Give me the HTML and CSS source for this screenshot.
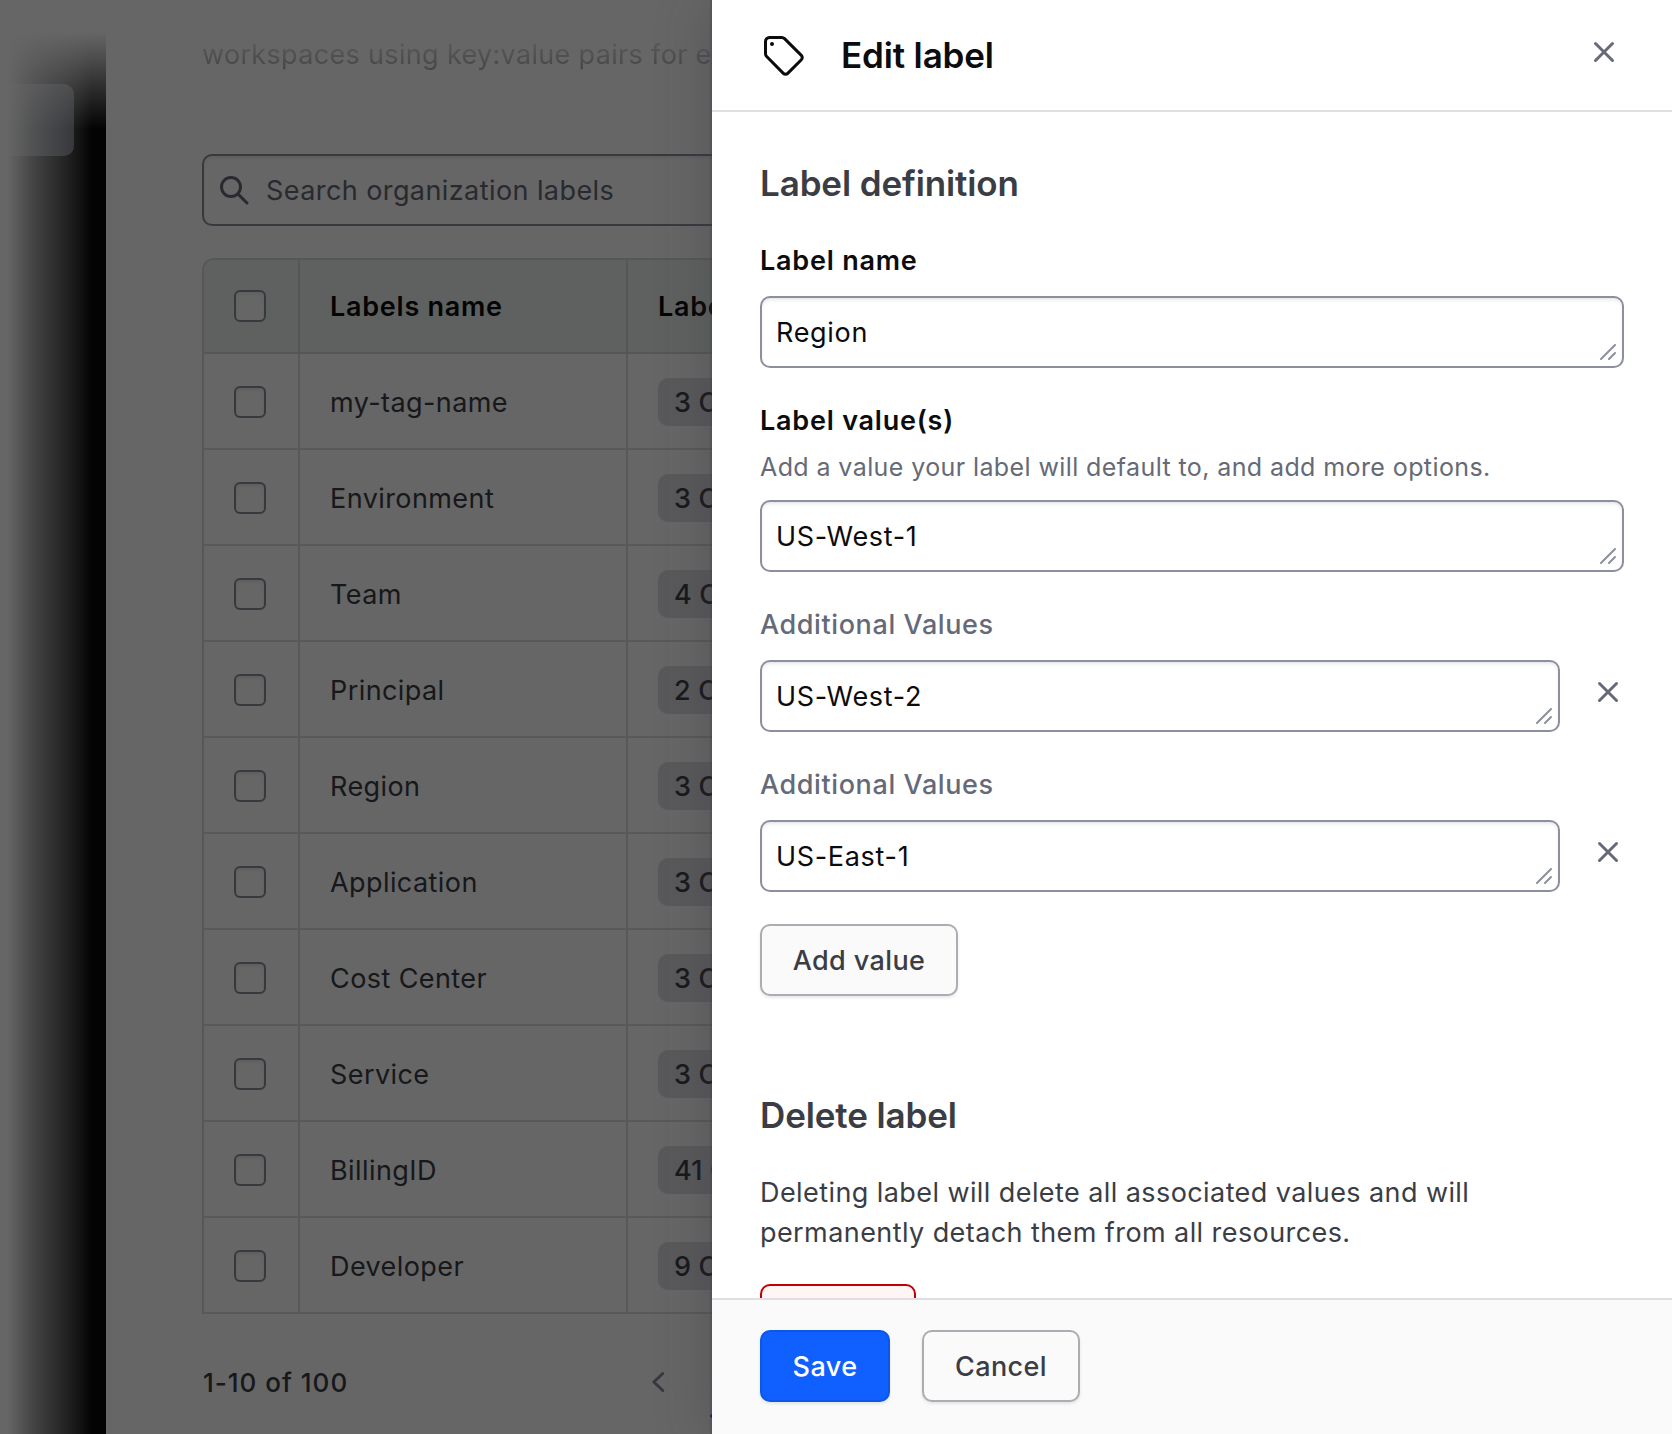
FILE: index.html
```html
<!DOCTYPE html>
<html lang="en">
<head>
<meta charset="utf-8">
<title>Edit label</title>
<link rel="stylesheet" href="styles.css">
</head>
<body>
<svg class="sprite" aria-hidden="true">
  <symbol id="x" viewBox="0 0 16 16"><path d="M3.75 3.75l8.5 8.5M12.25 3.75l-8.5 8.5" fill="none" stroke="currentColor" stroke-width="1.5" stroke-linecap="round"/></symbol>
  <symbol id="grip" viewBox="0 0 16 16"><path d="M1 15L15 1M9 15l6-6" fill="none" stroke="currentColor" stroke-width="2" stroke-linecap="round"/></symbol>
</svg>
<div class="app">
  <aside class="sidebar"><div class="sidebar-item"></div></aside>
  <main class="page">
    <p class="intro">workspaces using key:value pairs for easy filtering</p>
    <div class="search">
      <svg width="32" height="32" viewBox="0 0 16 16"><g fill="none" stroke="currentColor" stroke-width="1.5" stroke-linecap="round"><circle cx="6.5" cy="6.5" r="4.75"/><path d="M10.2 10.2l4.3 4.3"/></g></svg>
      <span>Search organization labels</span>
    </div>
    <div class="table">
      <div class="row head"><div class="cell"><i class="check"></i></div><div class="cell"><span>Labels name</span></div><div class="cell"><span>Label values</span></div></div>
      <div class="row"><div class="cell"><i class="check"></i></div><div class="cell"><span>my-tag-name</span></div><div class="cell"><span class="badge">3 Options</span></div></div>
      <div class="row"><div class="cell"><i class="check"></i></div><div class="cell"><span>Environment</span></div><div class="cell"><span class="badge">3 Options</span></div></div>
      <div class="row"><div class="cell"><i class="check"></i></div><div class="cell"><span>Team</span></div><div class="cell"><span class="badge">4 Options</span></div></div>
      <div class="row"><div class="cell"><i class="check"></i></div><div class="cell"><span>Principal</span></div><div class="cell"><span class="badge">2 Options</span></div></div>
      <div class="row"><div class="cell"><i class="check"></i></div><div class="cell"><span>Region</span></div><div class="cell"><span class="badge">3 Options</span></div></div>
      <div class="row"><div class="cell"><i class="check"></i></div><div class="cell"><span>Application</span></div><div class="cell"><span class="badge">3 Options</span></div></div>
      <div class="row"><div class="cell"><i class="check"></i></div><div class="cell"><span>Cost Center</span></div><div class="cell"><span class="badge">3 Options</span></div></div>
      <div class="row"><div class="cell"><i class="check"></i></div><div class="cell"><span>Service</span></div><div class="cell"><span class="badge">3 Options</span></div></div>
      <div class="row"><div class="cell"><i class="check"></i></div><div class="cell"><span>BillingID</span></div><div class="cell"><span class="badge">41 Options</span></div></div>
      <div class="row"><div class="cell"><i class="check"></i></div><div class="cell"><span>Developer</span></div><div class="cell"><span class="badge">9 Options</span></div></div>
    </div>
    <div class="pagination">
      <span class="count">1-10 of 100</span>
      <svg width="32" height="32" viewBox="0 0 16 16"><path d="M10.4 3.75L5.9 8l4.5 4.25" fill="none" stroke="currentColor" stroke-width="1.5" stroke-linecap="round" stroke-linejoin="round"/></svg>
      <span class="current"></span>
    </div>
  </main>
</div>
<div class="backdrop"></div>
<section class="flyout">
  <header class="flyout-header">
    <svg width="48" height="48" viewBox="0 0 24 24"><path d="M2.75 4.75a2 2 0 0 1 2-2h6.1a2 2 0 0 1 1.42.59l8.4 8.35a1.55 1.55 0 0 1 0 2.2l-6.8 6.78a1.55 1.55 0 0 1-2.2 0l-8.33-8.4a2 2 0 0 1-.59-1.42z" fill="none" stroke="currentColor" stroke-width="1.5" stroke-linejoin="round"/><circle cx="6" cy="6" r="1" fill="currentColor"/></svg>
    <h1>Edit label</h1>
    <svg class="close" width="32" height="32"><use href="#x"/></svg>
  </header>
  <div class="flyout-body">
    <h2>Label definition</h2>
    <div class="field">
      <label>Label name</label>
      <div class="control"><div class="box"><textarea rows="1">Region</textarea><svg class="grip" width="16" height="16"><use href="#grip"/></svg></div></div>
    </div>
    <div class="field tight">
      <label>Label value(s)</label>
      <p class="helper">Add a value your label will default to, and add more options.</p>
      <div class="control"><div class="box"><textarea rows="1">US-West-1</textarea><svg class="grip" width="16" height="16"><use href="#grip"/></svg></div></div>
    </div>
    <div class="field">
      <label class="muted">Additional Values</label>
      <div class="control"><div class="box"><textarea rows="1">US-West-2</textarea><svg class="grip" width="16" height="16"><use href="#grip"/></svg></div><svg class="remove" width="32" height="32"><use href="#x"/></svg></div>
    </div>
    <div class="field">
      <label class="muted">Additional Values</label>
      <div class="control"><div class="box"><textarea rows="1">US-East-1</textarea><svg class="grip" width="16" height="16"><use href="#grip"/></svg></div><svg class="remove" width="32" height="32"><use href="#x"/></svg></div>
    </div>
    <button class="btn add">Add value</button>
    <h2 class="delete-title">Delete label</h2>
    <p class="text">Deleting label will delete all associated values and will<br>permanently detach them from all resources.</p>
    <button class="btn critical" aria-label="Delete"></button>
  </div>
  <footer class="flyout-footer">
    <button class="btn primary">Save</button>
    <button class="btn cancel">Cancel</button>
  </footer>
</section>
</body>
</html>
```
FILE: styles.css
```css
* { box-sizing: border-box; }
body {
  margin: 0;
  height: 1434px;
  overflow: hidden;
  background: #fff;
  color: #3b3d45;
  font: 400 27px/40px Inter, "Liberation Sans", sans-serif;
  letter-spacing: 0.42px;
}
h1, h2, p { margin: 0; font-weight: inherit; }
svg { display: block; flex: none; }
.sprite { position: absolute; width: 0; height: 0; }

/* Page behind the flyout */
.app { display: flex; height: 1434px; }
.sidebar { position: relative; flex: none; width: 106px; padding-top: 84px; background: #080808; }
.sidebar::after {
  content: "";
  position: absolute;
  inset: 0;
  background:
    linear-gradient(#fff 32px, rgba(255,255,255,.72) 60px, rgba(255,255,255,.4) 90px, rgba(255,255,255,0) 130px),
    linear-gradient(90deg, #fff 7px, rgba(255,255,255,.86) 18px, rgba(255,255,255,.66) 33px, rgba(255,255,255,.48) 50px, rgba(255,255,255,.32) 66px, rgba(255,255,255,.16) 80px, rgba(255,255,255,0) 92px);
}
.sidebar-item { width: 74px; height: 72px; border-radius: 0 10px 10px 0; background: #656a76; }
.page { flex: none; width: 1566px; padding: 35px 0 0 96px; }
.intro { height: 40px; white-space: nowrap; color: #656a76; letter-spacing: .33px; -webkit-mask-image: linear-gradient(rgba(0,0,0,.12), rgba(0,0,0,.6)); mask-image: linear-gradient(rgba(0,0,0,.12), rgba(0,0,0,.6)); }
.search {
  display: flex; align-items: center; gap: 16px;
  height: 72px; margin-top: 79px; padding: 0 14px;
  border: 2px solid #8c909c; border-radius: 10px;
  color: #656a76; box-shadow: inset 0 2px 4px -1px rgba(101,106,118,.18);
}
.search span { padding-top: 2px; }
.table { margin-top: 32px; border: 2px solid #d8d9dc; border-bottom: 0; border-radius: 12px 12px 0 0; overflow: hidden; }
.row { display: grid; grid-template-columns: 94px 328px 1fr; height: 96px; border-bottom: 2px solid #dedfe3; }
.row.head { height: 94px; background: #eef2f0; border-color: #d5d8d8; color: #0c0c0e; font-weight: 600; letter-spacing: .75px; }
.cell { display: flex; align-items: center; padding: 2px 0 0 30px; border-left: 2px solid #dedfe3; }
.cell span { padding-top: 2px; }
.head .cell { padding-top: 0; border-color: #d5d8d8; }
.cell:first-child { border-left: 0; }
.check { width: 32px; height: 32px; border: 2px solid #8c909c; border-radius: 6px; background: #fff; box-shadow: inset 0 2px 4px -1px rgba(101,106,118,.18); }
.cell .badge { padding: 5px 16px 3px; border-radius: 10px; background: #dedfe3; font-weight: 500; letter-spacing: .2px; }
.pagination { display: flex; align-items: center; height: 40px; margin-top: 48px; }
.count { width: 440px; padding: 2px 0 0 1px; font-size: 26px; font-weight: 500; letter-spacing: 1px; }
.pagination svg { color: #8c909c; }
.current { align-self: flex-end; width: 32px; height: 4px; margin: 0 0 -16px 36px; border-radius: 2px; background: #1060ff; }

.backdrop { position: absolute; inset: 0; background: rgba(0,0,0,.6); }

/* Flyout */
.flyout {
  position: absolute; inset: 0 0 0 712px;
  display: flex; flex-direction: column;
  background: #fff;
  box-shadow: 0 0 0 2px rgba(59,61,69,.25), 0 4px 48px rgba(59,61,69,.4);
}
.flyout-header { display: flex; align-items: flex-start; flex: none; height: 112px; padding: 32px 52px 0 48px; border-bottom: 2px solid #dedfe3; color: #0c0c0e; }
h1 { flex: 1; margin: -1px 0 0 33px; font-size: 35px; line-height: 48px; font-weight: 600; letter-spacing: -.15px; }
.close { margin-top: 4px; color: #656a76; }
.flyout-body { flex: 1; min-height: 0; overflow: hidden; padding: 47px 48px 0; }
h2 { font-size: 35px; line-height: 48px; font-weight: 600; letter-spacing: -.12px; }
.field { display: flex; flex-direction: column; gap: 16px; margin-top: 32px; }
h2 + .field { margin-top: 33px; }
.field.tight { gap: 0; }
.field label { height: 40px; padding-top: 1px; font-weight: 600; letter-spacing: .78px; color: #0c0c0e; }
.field label.muted { font-weight: 500; letter-spacing: .6px; color: #656a76; }
.helper { height: 36px; margin: 8px 0 16px; padding-top: 1px; font-size: 25px; line-height: 36px; letter-spacing: .4px; color: #656a76; white-space: nowrap; }
.control { display: flex; gap: 32px; }
.box { position: relative; flex: 1; }
textarea {
  display: block; width: 100%; height: 72px; padding: 15px 14px 13px; overflow: hidden;
  border: 2px solid #8c909c; border-radius: 10px; background: #fff; resize: none; outline: 0;
  font: inherit; letter-spacing: .68px; color: #0c0c0e;
  box-shadow: inset 0 3px 4px -2px rgba(101,106,118,.22);
}
.grip { position: absolute; right: 8px; bottom: 8px; color: #8c909c; }
.remove { margin-top: 16px; color: #656a76; }
.btn {
  display: block; height: 72px; padding: 2px 0 0; border: 2px solid #acadb3; border-radius: 10px;
  background: #fafafa; color: #3b3d45; font: inherit; font-weight: 500; letter-spacing: .4px;
  box-shadow: 0 2px 3px rgba(101,106,118,.15);
}
.add { width: 198px; margin-top: 32px; }
.delete-title { margin-top: 95px; }
.text { margin-top: 34px; white-space: nowrap; }
.critical { width: 156px; margin-top: 31px; border-color: #c00005; background: #fff5f5; color: #c00005; }
.flyout-footer { display: flex; gap: 32px; flex: none; height: 136px; padding: 30px 48px 0; border-top: 2px solid #dedfe3; background: #fafafa; }
.primary { width: 130px; border-color: #0c56e9; background: #1060ff; color: #fff; }
.cancel { width: 158px; }
```
